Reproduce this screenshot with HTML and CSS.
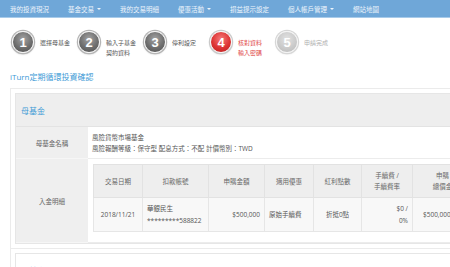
FILE: index.html
```html
<!DOCTYPE html>
<html lang="zh-Hant">
<head>
<meta charset="utf-8">
<title>iTurn定期循環投資確認</title>
<link rel="stylesheet" href="styles.css">
</head>
<body>
<nav class="topnav">
  <a class="nav-item">我的投資現況</a>
  <a class="nav-item">基金交易<span class="caret"></span></a>
  <a class="nav-item">我的交易明細</a>
  <a class="nav-item">優惠活動<span class="caret"></span></a>
  <a class="nav-item">損益提示設定</a>
  <a class="nav-item">個人帳戶管理<span class="caret"></span></a>
  <a class="nav-item">網站地圖</a>
</nav>

<ol class="steps">
  <li class="step"><span class="step-num">1</span><span class="step-label">選擇母基金</span></li>
  <li class="step"><span class="step-num">2</span><span class="step-label">輸入子基金<br>契約資料</span></li>
  <li class="step"><span class="step-num">3</span><span class="step-label">停利設定</span></li>
  <li class="step step-current"><span class="step-num">4</span><span class="step-label">核對資料<br>輸入密碼</span></li>
  <li class="step step-todo"><span class="step-num">5</span><span class="step-label">申請完成</span></li>
</ol>

<main class="content">
  <h2 class="page-title">iTurn定期循環投資確認</h2>

  <section class="wrap">
    <div class="panel">
      <div class="panel-heading">母基金</div>
      <table class="info">
        <colgroup><col class="info-label-col"><col></colgroup>
        <tr class="info-row-name">
          <th>母基金名稱</th>
          <td>風險貨幣市場基金<br>風險報酬等級：保守型 配息方式：不配 計價幣別：TWD</td>
        </tr>
        <tr>
          <th>入金明細</th>
          <td class="detail-cell">
            <table class="detail">
              <colgroup>
                <col class="c1"><col class="c2"><col class="c3"><col class="c4"><col class="c5"><col class="c6"><col class="c7">
              </colgroup>
              <tr>
                <th>交易日期</th>
                <th>扣款帳號</th>
                <th>申購金額</th>
                <th>適用優惠</th>
                <th>紅利點數</th>
                <th>手續費 /<br>手續費率</th>
                <th>申購<br>總價金</th>
              </tr>
              <tr>
                <td class="center">2018/11/21</td>
                <td class="left">華銀民生<br>*********588822</td>
                <td class="right">$500,000</td>
                <td class="left">原始手續費</td>
                <td class="center">折抵0點</td>
                <td class="right">$0 /<br>0%</td>
                <td class="right total">$500,000</td>
              </tr>
            </table>
          </td>
        </tr>
      </table>
    </div>
  </section>

  <section class="wrap wrap-next">
    <div class="panel panel-plain">
      <div class="panel-heading">子基金明細</div>
    </div>
  </section>
</main>
</body>
</html>
```

FILE: styles.css
```css
html, body {
  margin: 0;
  padding: 0;
  overflow: hidden;
  background: #ffffff;
}

body {
  font-family: "Open Sans", "Noto Sans CJK TC", sans-serif;
  font-size: 6.5px;
  color: #555555;
}

/* top navigation */
.topnav {
  display: flex;
  align-items: center;
  height: 17px;
  background: #6fa7d8;
  border-bottom: 1px solid #a8cbea;
  padding-left: 0;
  white-space: nowrap;
}

.nav-item {
  color: #eef5fc;
  font-size: 6.5px;
  padding: 0 9.5px;
  display: flex;
  align-items: center;
}

.nav-item:first-child {
  padding-left: 10px;
}

.caret {
  display: inline-block;
  width: 0;
  height: 0;
  margin-left: 3px;
  border-top: 2.5px solid #eef5fc;
  border-left: 2.5px solid transparent;
  border-right: 2.5px solid transparent;
}

/* steps */
.steps {
  list-style: none;
  margin: 13px 0 0 12px;
  padding: 0;
  display: flex;
}

.step {
  width: 66px;
  display: flex;
  align-items: flex-start;
  flex: none;
}

.step-num {
  flex: none;
  width: 20px;
  height: 20px;
  border-radius: 50%;
  border: 1.5px solid #f4f4f4;
  box-shadow: 0 0 0 1.2px #b5b5b5, 0 1px 2px rgba(0, 0, 0, 0.35);
  background: radial-gradient(circle at 50% 35%, #a3a3a3 0%, #6e6e6e 55%, #4e4e4e 100%);
  color: #ffffff;
  font-family: "Liberation Sans", Arial, sans-serif;
  font-weight: bold;
  font-size: 13px;
  display: flex;
  align-items: center;
  justify-content: center;
}

.step-label {
  margin-left: 6px;
  padding-top: 7px;
  line-height: 10px;
  font-size: 6px;
  color: #555555;
  white-space: nowrap;
}

.step-current .step-num {
  background: radial-gradient(circle at 50% 35%, #f47a7a 0%, #dd3333 55%, #b81d1d 100%);
  box-shadow: 0 0 0 1.2px #c9c9c9, 0 1px 2px rgba(0, 0, 0, 0.3);
}

.step-current .step-label {
  color: #e04545;
}

.step-todo .step-num {
  background: radial-gradient(circle at 50% 35%, #e2e2e2 0%, #c9c9c9 60%, #b9b9b9 100%);
  box-shadow: 0 0 0 1.2px #d6d6d6, 0 1px 2px rgba(0, 0, 0, 0.15);
}

.step-todo .step-label {
  color: #b0b0b0;
}

/* content */
.content {
  width: 600px;
  padding-left: 10px;
}

.page-title {
  margin: 13px 0 0 0;
  font-size: 8px;
  line-height: 12px;
  font-weight: normal;
  color: #3d9ad6;
}

.wrap {
  margin-top: 5px;
  border: 1px solid #ebebeb;
  padding: 4px;
}

.wrap-next {
  margin-top: 0;
  border-top: 0;
}

.panel {
  border: 1px solid #e6e6e6;
  background: #ffffff;
}

.panel-heading {
  height: 32px;
  display: flex;
  align-items: center;
  padding-left: 5px;
  font-size: 8px;
  color: #3d9ad6;
  background: #eeeeee;
  border-bottom: 1px solid #e3e3e3;
}

.panel-plain .panel-heading {
  background: #ffffff;
  border-bottom: 0;
}

/* info table */
.info {
  width: 100%;
  border-collapse: collapse;
  table-layout: fixed;
}

.info-label-col {
  width: 72px;
}

.info > tbody > tr > th,
.info > tr > th {
  background: #efefef;
  font-weight: normal;
  color: #666666;
  text-align: center;
  vertical-align: middle;
  padding: 0;
  border-bottom: 1px solid #f6f6f6;
}

.info > tbody > tr > td,
.info > tr > td {
  padding: 0 4px;
  line-height: 11px;
  color: #555555;
  border-bottom: 1px solid #ececec;
  vertical-align: middle;
}

.info-row-name th,
.info-row-name td {
  height: 31px;
}

.info > tbody > tr > td.detail-cell {
  padding: 5px 0 10px 5px;
}

/* detail table */
.detail {
  width: 379px;
  table-layout: fixed;
  border-collapse: collapse;
  border: 1px solid #e2e2e2;
}

.c1 { width: 49px; }
.c2 { width: 66px; }
.c3 { width: 56px; }
.c4 { width: 49px; }
.c5 { width: 48px; }
.c6 { width: 51px; }
.c7 { width: 60px; }

.detail th {
  height: 32px;
  background: #eeeeee;
  font-weight: normal;
  color: #666666;
  text-align: center;
  line-height: 11px;
  padding: 0;
  border: 1px solid #e2e2e2;
}

.detail td {
  height: 33px;
  background: #f8f8f8;
  color: #555555;
  line-height: 12px;
  padding: 0 4px;
  border: 1px solid #e6e6e6;
  white-space: nowrap;
}

.detail td.center { text-align: center; }
.detail td.left { text-align: left; }
.detail td.right { text-align: right; }
.detail td.total { padding-right: 12px; text-align: left; padding-left: 10px; }
```
